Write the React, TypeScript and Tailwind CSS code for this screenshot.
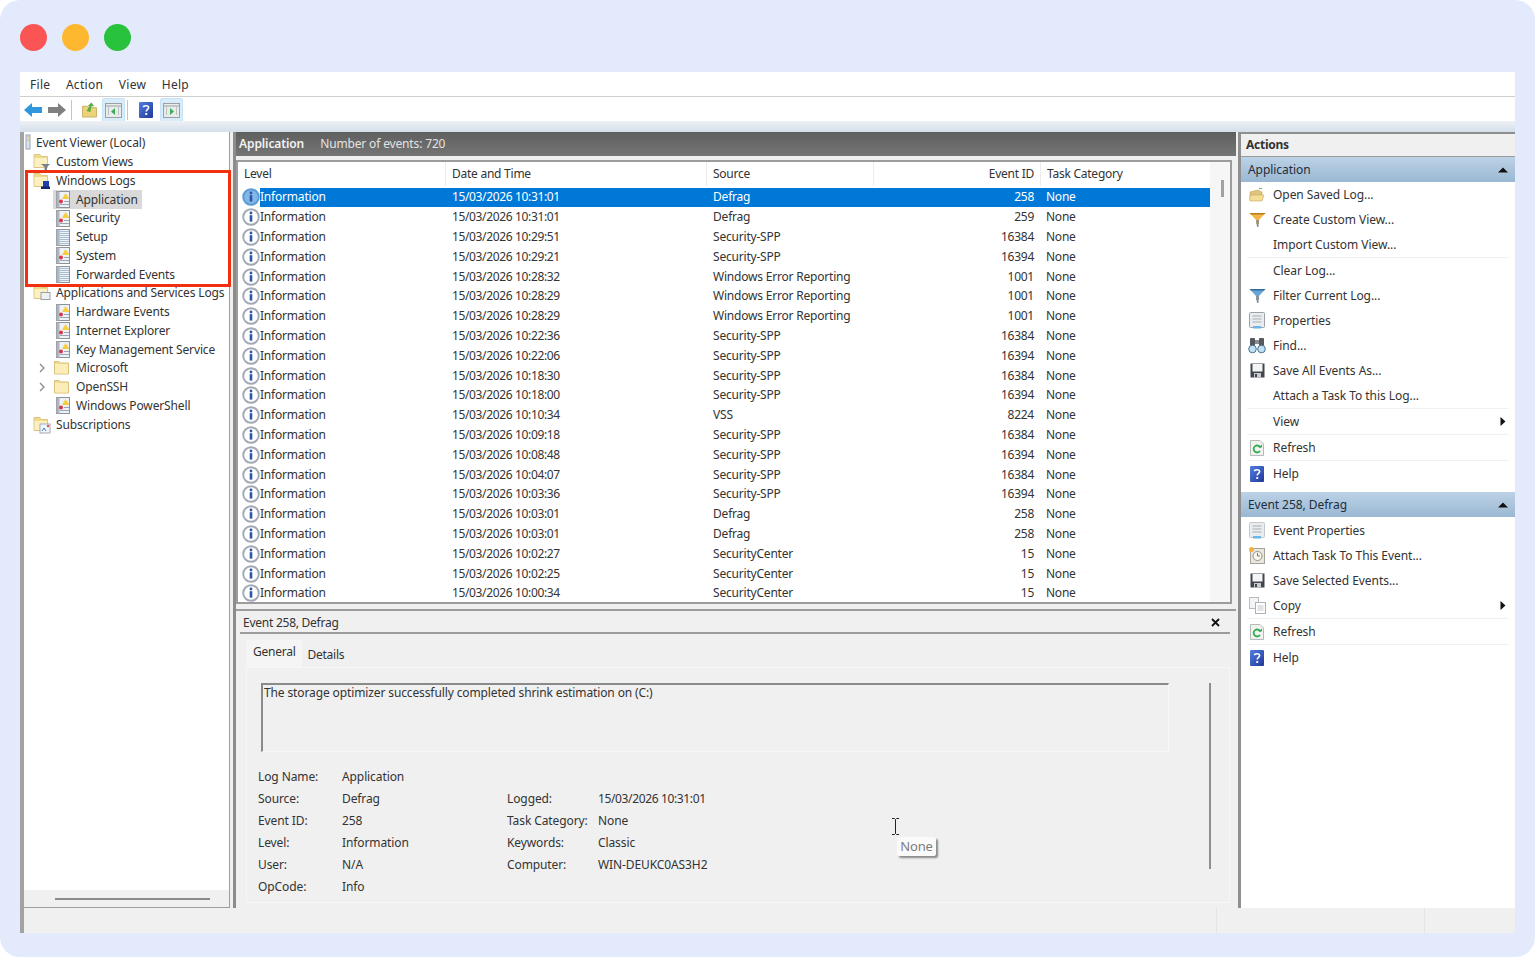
import React from "react";

const F = { fontFamily: '"Noto Sans", "Open Sans", sans-serif' };

function LogIcon({ plain = false }: { plain?: boolean }) {
  return (
    <svg width="16" height="17" viewBox="0 0 16 17" className="shrink-0">
      <rect x="1.5" y="0.5" width="13" height="16" fill="#eef1f5" stroke="#8d9198" />
      <rect x="1.5" y="0.5" width="3" height="16" fill="#b0b5bd" />
      {plain ? (
        <g stroke="#a9bcd0">
          {[2, 4, 6, 8, 10, 12, 14].map((y) => (
            <path key={y} d={`M3 ${y + 0.5}H14`} />
          ))}
        </g>
      ) : (
        <g>
          <path d="M10.5 2 L14.5 8 H7 Z" fill="#f6cf3e" />
          <circle cx="6" cy="10.5" r="2" fill="#d5384a" />
          <path d="M9 10.5H14M5 13.5H14" stroke="#9aa6b4" />
        </g>
      )}
    </svg>
  );
}

function Folder({ variant, small }: { variant?: "filter" | "log" | "apps" | "subs"; small?: boolean }) {
  return (
    <svg width="18" height="18" viewBox="0 0 18 18" className="shrink-0">
      {small ? (
        <g>
          <path d="M1.5 2.5H6L7 4H15.5V15H1.5Z" fill="#f3dc92" stroke="#d8c27c" />
          <rect x="2" y="5" width="13" height="9.5" fill="#fbedb8" />
        </g>
      ) : (
        <g>
          <path d="M1 1.5H7L8.5 3.5H14.5V14.5H1Z" fill="#f1d98a" stroke="#dcc585" />
          <rect x="1.5" y="5" width="12.5" height="9" fill="#fbf0c2" />
        </g>
      )}
      {variant === "filter" && <path d="M8 11H17L14 14V17.5H11.5V14Z" fill="#7c8288" />}
      {variant === "log" && (
        <g>
          <rect x="10" y="9" width="6" height="6" fill="#1f3fa8" />
          <rect x="8" y="14.5" width="9" height="2.5" fill="#16246e" />
        </g>
      )}
      {variant === "apps" && <rect x="8" y="8.5" width="9" height="7" fill="#eef1f2" stroke="#9aa0a6" />}
      {variant === "subs" && (
        <g>
          <rect x="7" y="8" width="10" height="9" fill="#f2f5fa" stroke="#a3acb8" />
          <path d="M9 15L11 12L13 15" stroke="#3f79c8" fill="none" />
          <circle cx="15" cy="10" r="1.2" fill="#d8505c" />
        </g>
      )}
    </svg>
  );
}

function Chevron() {
  return (
    <svg width="8" height="10" viewBox="0 0 8 10" className="shrink-0">
      <path d="M2 1L6 5L2 9" fill="none" stroke="#8a8a8a" strokeWidth="1.3" />
    </svg>
  );
}

function ComputerIcon() {
  return (
    <svg width="7" height="18" viewBox="0 0 7 18" className="shrink-0">
      <rect x="2" y="1" width="4" height="14" fill="#dbe3ee" stroke="#9aa3b0" />
      <path d="M3 3H5M3 6H5" stroke="#e0b93c" />
    </svg>
  );
}

function TreeRow({ pl, icon, label, selected, chevron }: { pl: string; icon: React.ReactNode; label: string; selected?: boolean; chevron?: boolean }) {
  return (
    <div className={`flex h-[18.75px] items-center ${pl}`}>
      {chevron && (
        <span className="mr-[7px] flex w-[8px] justify-center">
          <Chevron />
        </span>
      )}
      <div className={`flex h-full items-center ${selected ? "-ml-[2px] bg-[#d9d9d9] px-[2px]" : ""}`}>
        {icon}
        <span className="ml-[3px] px-[2px] leading-[18px] whitespace-nowrap">{label}</span>
      </div>
    </div>
  );
}

function InfoIcon({ selected }: { selected?: boolean }) {
  return (
    <svg width="18" height="18" viewBox="0 0 18 18" className="shrink-0">
      <circle cx="9" cy="9" r="7.8" fill={selected ? "#82b8e8" : "#fff"} stroke={selected ? "#5a9ad6" : "#a2a9b5"} strokeWidth="1.9" />
      <circle cx="9" cy="5" r="1.4" fill="#2a55a8" />
      <rect x="7.7" y="7.2" width="2.6" height="6.4" fill="#2a55a8" />
    </svg>
  );
}

const events: [string, string, string, string][] = [
  ["10:31:01", "Defrag", "258", "None"],
  ["10:31:01", "Defrag", "259", "None"],
  ["10:29:51", "Security-SPP", "16384", "None"],
  ["10:29:21", "Security-SPP", "16394", "None"],
  ["10:28:32", "Windows Error Reporting", "1001", "None"],
  ["10:28:29", "Windows Error Reporting", "1001", "None"],
  ["10:28:29", "Windows Error Reporting", "1001", "None"],
  ["10:22:36", "Security-SPP", "16384", "None"],
  ["10:22:06", "Security-SPP", "16394", "None"],
  ["10:18:30", "Security-SPP", "16384", "None"],
  ["10:18:00", "Security-SPP", "16394", "None"],
  ["10:10:34", "VSS", "8224", "None"],
  ["10:09:18", "Security-SPP", "16384", "None"],
  ["10:08:48", "Security-SPP", "16394", "None"],
  ["10:04:07", "Security-SPP", "16384", "None"],
  ["10:03:36", "Security-SPP", "16394", "None"],
  ["10:03:01", "Defrag", "258", "None"],
  ["10:03:01", "Defrag", "258", "None"],
  ["10:02:27", "SecurityCenter", "15", "None"],
  ["10:02:25", "SecurityCenter", "15", "None"],
  ["10:00:34", "SecurityCenter", "15", "None"],
];

function IOpen() {
  return (
    <svg width="16" height="16" viewBox="0 0 16 16">
      <path d="M10 1.5H13" stroke="#5fb35f" strokeWidth="1" />
      <path d="M1 5L9 3L13 5V13H1Z" fill="#e0c47c" stroke="#bfa35f" strokeWidth="0.6" />
      <path d="M1 8H15L13 14H1Z" fill="#f4dd96" stroke="#c6a95f" strokeWidth="0.6" />
    </svg>
  );
}
function IFunnel({ color }: { color: "orange" | "blue" }) {
  const c = color === "orange" ? "#f3b648" : "#6aa5d2";
  const d = color === "orange" ? "#b87a14" : "#2f6a9c";
  return (
    <svg width="17" height="16" viewBox="0 0 17 16">
      <path d="M0.5 1H16.5L10 8V12H7V8Z" fill={c} />
      <path d="M7 8H10L9.5 15H8Z" fill="#8d9296" />
      <path d="M0.5 1H16.5L15 2.5H2Z" fill={d} />
    </svg>
  );
}
function IProps({ faded }: { faded?: boolean }) {
  return (
    <svg width="16" height="17" viewBox="0 0 16 17">
      <rect x="0.5" y="0.5" width="15" height="15" rx="1" fill="#e9edf0" stroke={faded ? "#c3c7cb" : "#9ba1a6"} />
      <path d="M3.5 4H12.5M3.5 7H12.5M3.5 10H12.5" stroke="#a8adb2" />
      <rect x="4" y="14" width="8" height="2.5" fill="#6eb4e6" />
    </svg>
  );
}
function IFind() {
  return (
    <svg width="18" height="17" viewBox="0 0 18 17">
      <rect x="2" y="1" width="5" height="8" rx="1" fill="#55595e" />
      <rect x="11" y="1" width="5" height="8" rx="1" fill="#55595e" />
      <rect x="7" y="3" width="4" height="4" fill="#8a8f94" />
      <circle cx="4.5" cy="12" r="3.8" fill="#bfe0f5" stroke="#4b6f8e" />
      <circle cx="13.5" cy="12" r="3.8" fill="#bfe0f5" stroke="#4b6f8e" />
    </svg>
  );
}
function ISave() {
  return (
    <svg width="15" height="15" viewBox="0 0 15 15">
      <path d="M0.5 0.5H14.5V14.5H0.5Z" fill="#40464c" />
      <rect x="2.5" y="1" width="10" height="7.5" fill="#f4f5f6" />
      <rect x="4" y="10" width="7" height="4.5" fill="#c9ccd0" />
      <rect x="5" y="11" width="2" height="3" fill="#40464c" />
    </svg>
  );
}
function IRefresh() {
  return (
    <svg width="14" height="16" viewBox="0 0 14 16">
      <path d="M0.5 0.5H10L13.5 4V15.5H0.5Z" fill="#f1f3f2" stroke="#b5bab6" />
      <path d="M10.3 7.5A3.5 3.5 0 1 0 10 11" fill="none" stroke="#2fae4a" strokeWidth="1.8" />
      <path d="M8.5 7.5H12V4.5Z" fill="#2fae4a" />
    </svg>
  );
}
function IHelp() {
  return (
    <svg width="14" height="16" viewBox="0 0 14 16">
      <defs>
        <linearGradient id="hg" x1="0" y1="0" x2="1" y2="1">
          <stop offset="0" stopColor="#4f7fe0" />
          <stop offset="1" stopColor="#22379a" />
        </linearGradient>
      </defs>
      <rect x="0" y="0" width="14" height="16" rx="1" fill="url(#hg)" />
      <path d="M4.5 5.2C4.5 3.4 9.6 3 9.6 5.6C9.6 7.3 7.2 7.5 7.2 9.6" fill="none" stroke="#fff" strokeWidth="1.6" />
      <rect x="6.3" y="11" width="1.9" height="2" fill="#fff" />
    </svg>
  );
}
function IClock() {
  return (
    <svg width="16" height="17" viewBox="0 0 16 17">
      <rect x="1.5" y="1.5" width="14" height="15" fill="#e8e6e0" stroke="#a5a39c" />
      <circle cx="2.5" cy="2.5" r="2.5" fill="#f2b23c" />
      <circle cx="8.5" cy="9" r="4.5" fill="#f7f7f4" stroke="#a08f72" />
      <path d="M8.5 6V9H11" stroke="#87765c" fill="none" />
    </svg>
  );
}
function ICopy() {
  return (
    <svg width="17" height="17" viewBox="0 0 17 17">
      <rect x="0.5" y="0.5" width="9" height="11" fill="#f3f4f5" stroke="#b9bcc0" />
      <rect x="6.5" y="5.5" width="10" height="11" fill="#fff" stroke="#aeb2b7" />
      <path d="M8.5 9H14.5M8.5 11H14.5M8.5 13H14.5" stroke="#c0c4c9" />
    </svg>
  );
}

function ActionRow({ icon, label, arrow }: { icon?: React.ReactNode; label: string; arrow?: boolean }) {
  return (
    <div className="flex h-[25px] items-center">
      <span className="flex w-[32px] shrink-0 justify-center">{icon}</span>
      <span className="flex-1 whitespace-nowrap">{label}</span>
      {arrow && (
        <svg width="6" height="9" viewBox="0 0 6 9" className="mr-[9px]">
          <path d="M0.5 0L5.5 4.5L0.5 9Z" fill="#111" />
        </svg>
      )}
    </div>
  );
}
const Sep = () => <div className="mx-[6px] h-px bg-[#f1f1f1]" />;

function ActionHead({ label }: { label: string }) {
  return (
    <div className="flex h-[25px] items-center justify-between bg-gradient-to-b from-[#bcd2e6] to-[#9ab8d3] pr-[7px] pl-[7px] text-[#1f2d3a]">
      <span>{label}</span>
      <svg width="10" height="6" viewBox="0 0 10 6">
        <path d="M0 5.5L5 0.5L10 5.5Z" fill="#111" />
      </svg>
    </div>
  );
}

function WindowBtn({ dir }: { dir: "left" | "right" }) {
  return (
    <span className="flex h-[24px] w-[23px] items-center justify-center rounded-[2px] border border-[#c6e3f8] bg-[#d8ecfa]">
      <svg width="17" height="15" viewBox="0 0 17 15">
        <rect x="0.5" y="0.5" width="16" height="14" fill="#e8ecea" stroke="#9aa0a3" />
        <path d="M1 3H16" stroke="#9aa0a3" />
        <path d={dir === "left" ? "M10 5V12L6 8.5Z" : "M7 5V12L11 8.5Z"} fill="#3cae5a" />
        <path d="M3 5H4M3 7H4M3 9H4M3 11H4M13 5H14M13 7H14M13 9H14M13 11H14" stroke="#8f9699" />
      </svg>
    </span>
  );
}

function Field({ label, value, w, date }: { label: string; value: string; w: string; date?: boolean }) {
  return (
    <div className="flex h-[22px] items-center">
      <span className={`${w} shrink-0`}>{label}</span>
      <span className={date ? "tracking-[-0.36px]" : ""}>{value}</span>
    </div>
  );
}

const cols = "grid-cols-[207px_261px_167px_167px_1fr]";

export default function App() {
  return (
    <div className="h-[957px] w-[1535px] overflow-hidden bg-white">
      <div className="flex h-full flex-col rounded-[20px] bg-[#e3eafc] px-[20px] pb-[24px] text-[12px] tracking-[-0.25px] text-[#333333]" style={F}>
        <div className="flex h-[72px] shrink-0 items-center gap-[15px] pt-[2px]">
          <span className="h-[27px] w-[27px] rounded-full bg-[#fb5454]" />
          <span className="h-[27px] w-[27px] rounded-full bg-[#fdb82f]" />
          <span className="h-[27px] w-[27px] rounded-full bg-[#28c23c]" />
        </div>

        <div className="flex h-[861px] flex-col overflow-hidden bg-[#f0f0f0]">
          {/* menu */}
          <div className="flex h-[25px] shrink-0 items-center gap-[15.5px] border-b border-[#cfcfcf] bg-white pt-[2px] pl-[10px] tracking-[0.3px]">
            <span>File</span>
            <span>Action</span>
            <span>View</span>
            <span>Help</span>
          </div>
          {/* toolbar */}
          <div className="flex h-[24px] shrink-0 items-center bg-white pt-[2px] pl-[4px]">
            <svg width="18" height="14" viewBox="0 0 18 14" className="mr-[6px]">
              <path d="M0 7L8 0V4H18V10H8V14Z" fill="#2f97dc" />
            </svg>
            <svg width="18" height="14" viewBox="0 0 18 14" className="mr-[5px]">
              <path d="M18 7L10 0V4H0V10H10V14Z" fill="#808080" />
            </svg>
            <span className="mr-[10px] h-[20px] w-px bg-[#c4c4c4]" />
            <svg width="15" height="16" viewBox="0 0 16 16" className="mr-[5px]">
              <path d="M0.5 4H6L7 5.5H15.5V15.5H0.5Z" fill="#ecd27a" stroke="#c8ae62" />
              <path d="M5 9L8 4H6L10 0L13 4H10L9 10Z" fill="#58ad3c" />
            </svg>
            <WindowBtn dir="left" />
            <span className="mx-[2px] h-[20px] w-px bg-[#c4c4c4]" />
            <span className="mr-[7px] ml-[9px] flex"><IHelp /></span>
            <WindowBtn dir="right" />
          </div>
          <div className="h-[11px] shrink-0 bg-gradient-to-b from-[#eef1f5] to-[#d3dfea]" />

          {/* main */}
          <div className="flex min-h-0 flex-1">
            {/* tree */}
            <div className="relative flex w-[210px] shrink-0 flex-col border-r border-b border-l-[4px] border-r-[#9e9e9e] border-b-[#9e9e9e] border-l-[#a3a3a3] bg-white tracking-[-0.13px]">
              <div className="flex-1 pt-[2px]">
                <TreeRow pl="pl-[0px]" icon={<ComputerIcon />} label="Event Viewer (Local)" />
                <TreeRow pl="pl-[9px]" icon={<Folder variant="filter" />} label="Custom Views" />
                <TreeRow pl="pl-[9px]" icon={<Folder variant="log" />} label="Windows Logs" />
                <TreeRow pl="pl-[31px]" icon={<LogIcon />} label="Application" selected />
                <TreeRow pl="pl-[31px]" icon={<LogIcon />} label="Security" />
                <TreeRow pl="pl-[31px]" icon={<LogIcon plain />} label="Setup" />
                <TreeRow pl="pl-[31px]" icon={<LogIcon />} label="System" />
                <TreeRow pl="pl-[31px]" icon={<LogIcon plain />} label="Forwarded Events" />
                <TreeRow pl="pl-[9px]" icon={<Folder variant="apps" />} label="Applications and Services Logs" />
                <TreeRow pl="pl-[31px]" icon={<LogIcon />} label="Hardware Events" />
                <TreeRow pl="pl-[31px]" icon={<LogIcon />} label="Internet Explorer" />
                <TreeRow pl="pl-[31px]" icon={<LogIcon />} label="Key Management Service" />
                <TreeRow pl="pl-[14px]" chevron icon={<Folder small />} label="Microsoft" />
                <TreeRow pl="pl-[14px]" chevron icon={<Folder small />} label="OpenSSH" />
                <TreeRow pl="pl-[31px]" icon={<LogIcon />} label="Windows PowerShell" />
                <TreeRow pl="pl-[9px]" icon={<Folder variant="subs" />} label="Subscriptions" />
              </div>
              <div className="flex h-[17px] items-center bg-[#f0f0f0] pr-[19px] pl-[31px]">
                <div className="h-[2px] w-full bg-[#8a8a8a]" />
              </div>
              <div className="pointer-events-none absolute top-[38px] left-[1px] h-[117px] w-[206px] border-[3px] border-[#f1300f]" />
            </div>

            {/* center */}
            <div className="ml-[3px] flex w-[1003px] shrink-0 flex-col border-l-[3px] border-[#8c8c8c]">
              <div className="flex h-[24px] shrink-0 items-center gap-[16px] bg-gradient-to-b from-[#5f5f5f] to-[#757575] pl-[3px] text-[#f2f2f2]">
                <b className="font-semibold tracking-[-0.1px]">Application</b>
                <span className="tracking-[-0.15px] text-[#e3e3e3]">Number of events: 720</span>
              </div>
              <div className="h-[4px] shrink-0 bg-[#f0f0f0]" />
              {/* table */}
              <div className="mr-[4px] flex h-[444px] shrink-0 border-2 border-[#9c9c9c] bg-white">
                <div className="min-w-0 flex-1">
                  <div className={`grid h-[25.5px] ${cols} items-center pb-[2px]`}>
                    <span className="pl-[6px]">Level</span>
                    <span className="border-l border-[#ececec] pl-[6px] leading-[24px]">Date and Time</span>
                    <span className="border-l border-[#ececec] pl-[6px] leading-[24px]">Source</span>
                    <span className="border-l border-[#ececec] pr-[6px] text-right leading-[24px]">Event ID</span>
                    <span className="border-l border-[#ececec] pl-[6px] leading-[24px]">Task Category</span>
                  </div>
                  {events.map((e, i) => {
                    const s = i === 0;
                    return (
                      <div key={i} className={`grid h-[19.8px] ${cols} items-center ${s ? "text-white" : ""}`}>
                        <span className="flex items-center pl-[4px]">
                          <InfoIcon selected={s} />
                          <span className={`flex h-[19.8px] flex-1 items-center tracking-[-0.2px] ${s ? "bg-[#0078d7]" : ""}`}>Information</span>
                        </span>
                        <span className={`flex h-[19.8px] items-center pl-[7px] tracking-[-0.36px] ${s ? "bg-[#0078d7]" : ""}`}>15/03/2026 {e[0]}</span>
                        <span className={`flex h-[19.8px] items-center pl-[7px] tracking-[-0.2px] ${s ? "bg-[#0078d7]" : ""}`}>{e[1]}</span>
                        <span className={`flex h-[19.8px] items-center justify-end pr-[6px] ${s ? "bg-[#0078d7]" : ""}`}>{e[2]}</span>
                        <span className={`flex h-[19.8px] items-center pl-[6px] ${s ? "bg-[#0078d7]" : ""}`}>{e[3]}</span>
                      </div>
                    );
                  })}
                </div>
                <div className="w-[20px] shrink-0 bg-[#f6f6f6] pt-[18px] pl-[11px]">
                  <div className="h-[17px] w-[3px] bg-[#a2a2a2]" />
                </div>
              </div>
              <div className="h-[5px] shrink-0 bg-[#f0f0f0]" />
              {/* detail */}
              <div className="relative flex min-h-0 flex-1 flex-col border-t-[2px] border-[#9c9c9c] pr-[6px] pl-[4px] tracking-[-0.1px]">
                <div className="flex h-[23px] shrink-0 items-center justify-between border-b-[2px] border-[#9c9c9c] pt-[2px] pl-[3px]">
                  <span className="tracking-[-0.25px]">Event 258, Defrag</span>
                  <svg width="9" height="9" viewBox="0 0 9 9" className="mr-[10px]">
                    <path d="M1 1L8 8M8 1L1 8" stroke="#111" strokeWidth="1.8" />
                  </svg>
                </div>
                <div className="flex h-[33px] shrink-0 items-end pl-[6px]">
                  <span className="flex h-[27px] items-center rounded-t-[3px] bg-[#f5f5f5] px-[7px] pb-[3px] tracking-[-0.25px]">General</span>
                  <span className="flex h-[24px] items-center pl-[5px] tracking-[-0.25px]">Details</span>
                </div>
                <div className="ml-[6px] flex min-h-0 flex-1 border border-[#f7f7f7] pt-[15px] pl-[14px]">
                  <div className="w-[908px] shrink-0">
                    <div className="h-[69px] border-t-2 border-r border-b border-l-2 border-t-[#8a8a8a] border-r-[#f7f7f7] border-b-[#f7f7f7] border-l-[#8a8a8a] pl-[1px] leading-[16px] tracking-[-0.12px]">
                      The storage optimizer successfully completed shrink estimation on (C:)
                    </div>
                    <div className="mt-[14px] -ml-[3px] flex">
                      <div className="w-[249px] shrink-0">
                        <Field w="w-[84px]" label="Log Name:" value="Application" />
                        <Field w="w-[84px]" label="Source:" value="Defrag" />
                        <Field w="w-[84px]" label="Event ID:" value="258" />
                        <Field w="w-[84px]" label="Level:" value="Information" />
                        <Field w="w-[84px]" label="User:" value="N/A" />
                        <Field w="w-[84px]" label="OpCode:" value="Info" />
                      </div>
                      <div className="pt-[22px]">
                        <Field w="w-[91px]" label="Logged:" value="15/03/2026 10:31:01" date />
                        <Field w="w-[91px]" label="Task Category:" value="None" />
                        <Field w="w-[91px]" label="Keywords:" value="Classic" />
                        <Field w="w-[91px]" label="Computer:" value="WIN-DEUKC0AS3H2" />
                      </div>
                    </div>
                  </div>
                  <div className="ml-[40px] h-[186px] w-[2px] bg-[#8f8f8f]" />
                </div>
                <div className="h-[5px] shrink-0" />
                {/* cursor + tooltip overlay */}
                <svg width="9" height="17" viewBox="0 0 9 17" className="absolute top-[207px] left-[655px]">
                  <path d="M1 0.5H3.5L4.5 1.5L5.5 0.5H8M4.5 1.5V15.5M1 16.5H3.5L4.5 15.5L5.5 16.5H8" fill="none" stroke="#222" />
                </svg>
                <div className="absolute top-[226px] left-[661px] flex h-[19px] w-[39px] items-center justify-center rounded-[2px] bg-[#fafafa] text-[13px] text-[#7d7d7d] shadow-[2px_2px_2px_#8a8a8a]">
                  None
                </div>
              </div>
            </div>

            {/* actions */}
            <div className="ml-[2px] flex min-w-0 flex-1 flex-col border-t-[2px] border-l-[3px] border-[#8f8f8f] bg-white tracking-[-0.05px]">
              <div className="flex h-[23px] shrink-0 items-center border-b border-[#9a9a9a] bg-[#f0f0f0] pl-[5px] font-bold tracking-[-0.25px]">Actions</div>
              <ActionHead label="Application" />
              <ActionRow icon={<IOpen />} label="Open Saved Log..." />
              <ActionRow icon={<IFunnel color="orange" />} label="Create Custom View..." />
              <ActionRow label="Import Custom View..." />
              <Sep />
              <ActionRow label="Clear Log..." />
              <ActionRow icon={<IFunnel color="blue" />} label="Filter Current Log..." />
              <ActionRow icon={<IProps />} label="Properties" />
              <ActionRow icon={<IFind />} label="Find..." />
              <ActionRow icon={<ISave />} label="Save All Events As..." />
              <ActionRow label="Attach a Task To this Log..." />
              <Sep />
              <ActionRow label="View" arrow />
              <Sep />
              <ActionRow icon={<IRefresh />} label="Refresh" />
              <Sep />
              <ActionRow icon={<IHelp />} label="Help" />
              <div className="h-[6px]" />
              <ActionHead label="Event 258, Defrag" />
              <div className="h-px" />
              <ActionRow icon={<IProps faded />} label="Event Properties" />
              <ActionRow icon={<IClock />} label="Attach Task To This Event..." />
              <ActionRow icon={<ISave />} label="Save Selected Events..." />
              <ActionRow icon={<ICopy />} label="Copy" arrow />
              <Sep />
              <ActionRow icon={<IRefresh />} label="Refresh" />
              <Sep />
              <ActionRow icon={<IHelp />} label="Help" />
            </div>
          </div>

          {/* status bar */}
          <div className="flex h-[25px] shrink-0 border-l-[4px] border-[#a3a3a3] bg-[#f0f0f0]">
            <div className="w-[1193px] border-r border-[#e4e4e4]" />
            <div className="w-[208px] border-r border-[#e4e4e4]" />
          </div>
        </div>
      </div>
    </div>
  );
}
